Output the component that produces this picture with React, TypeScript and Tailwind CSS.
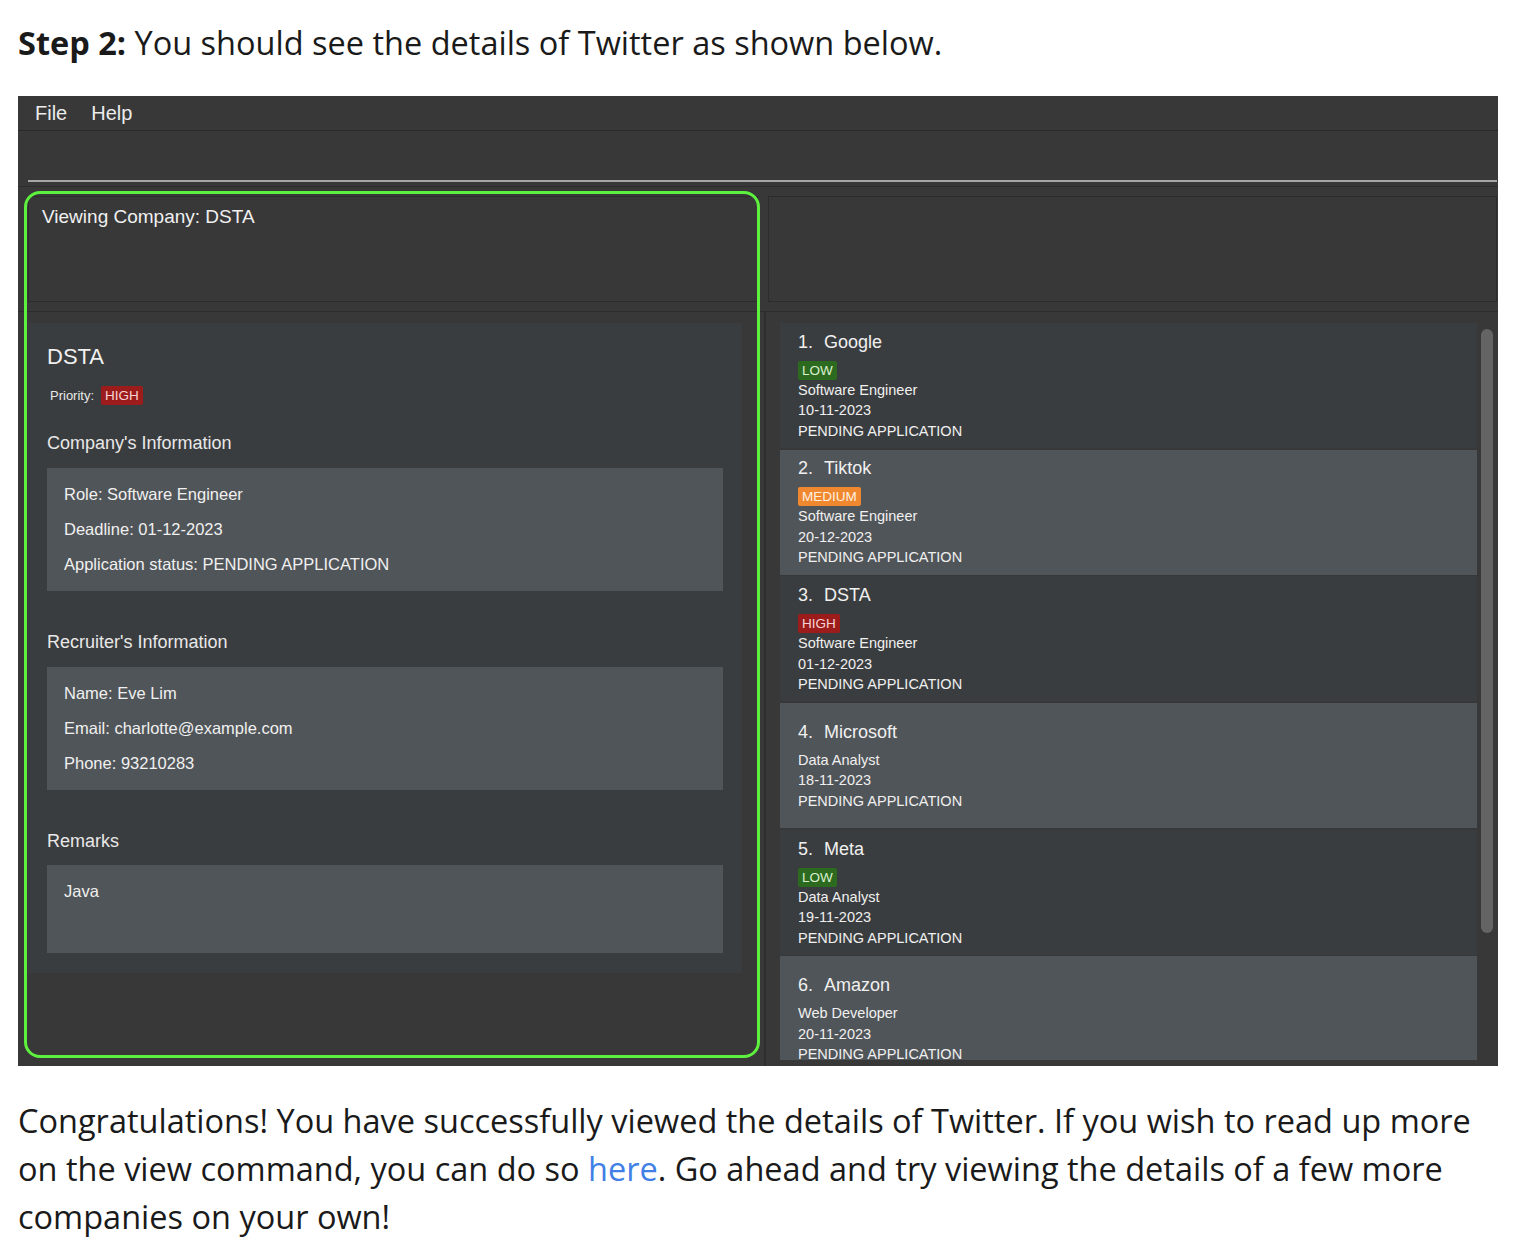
import React from "react";

type Level = "LOW" | "MEDIUM" | "HIGH";

function Badge({ level }: { level: Level }) {
  const cls =
    level === "LOW"
      ? "bg-[#2c6a1f] text-[#dcefcf]"
      : level === "MEDIUM"
      ? "bg-[#f0882f] text-[#fff0e0]"
      : "bg-[#9c1c1c] text-[#f6d3d3]";
  return (
    <span className={`inline-block h-[19px] px-[4px] leading-[19px] text-[13.5px] rounded-[2px] ${cls}`}>
      {level}
    </span>
  );
}

type Item = { n: number; name: string; level?: Level; role: string; date: string };

const items: Item[] = [
  { n: 1, name: "Google", level: "LOW", role: "Software Engineer", date: "10-11-2023" },
  { n: 2, name: "Tiktok", level: "MEDIUM", role: "Software Engineer", date: "20-12-2023" },
  { n: 3, name: "DSTA", level: "HIGH", role: "Software Engineer", date: "01-12-2023" },
  { n: 4, name: "Microsoft", role: "Data Analyst", date: "18-11-2023" },
  { n: 5, name: "Meta", level: "LOW", role: "Data Analyst", date: "19-11-2023" },
  { n: 6, name: "Amazon", role: "Web Developer", date: "20-11-2023" },
];

function ListCard({ item, light }: { item: Item; light: boolean }) {
  return (
    <div
      className={`h-[125px] shrink-0 flex flex-col justify-center px-[18px] text-[#f0f0f0] ${
        light ? "bg-[#505559]" : "bg-[#3a3d3f]"
      } ${item.n === 6 ? "justify-start pt-[17px]" : ""}`}
    >
      <div className="flex text-[18px] leading-[24px]">
        <span>{item.n}.</span>
        <span className="ml-[11px]">{item.name}</span>
      </div>
      {item.level ? (
        <div className="mt-[7px] flex">
          <Badge level={item.level} />
        </div>
      ) : (
        <div className="h-[6px]" />
      )}
      <div className="text-[14.5px] leading-[20.5px]">
        <div>{item.role}</div>
        <div>{item.date}</div>
        <div>PENDING APPLICATION</div>
      </div>
    </div>
  );
}

function InfoBox({ lines, minH }: { lines: string[]; minH?: string }) {
  return (
    <div className={`bg-[#505559] px-[17px] py-[9px] ${minH ?? ""}`}>
      {lines.map((l) => (
        <div key={l} className="text-[16.5px] leading-[35px] text-[#f0f0f0]">
          {l}
        </div>
      ))}
    </div>
  );
}

export default function App() {
  return (
    <div className="min-h-[1256px] bg-white font-['Liberation_Sans',Arial,sans-serif] text-[#111]">
      <div className="px-[18px] pt-[25px]">
        <h1 className="font-['Open_Sans',sans-serif] text-[32.5px] leading-[36px] font-normal whitespace-nowrap text-[#1a1a1a]">
          <b className="font-bold">Step 2:</b> You should see the details of Twitter as shown below.
        </h1>

        <div className="relative mt-[35px] w-[1480px] h-[970px] bg-[#383838] flex flex-col overflow-hidden">
          {/* menu bar */}
          <div className="h-[35px] shrink-0 border-b border-[#2a2a2a] flex items-center px-[17px] gap-[24px] text-[20px] text-[#ececec]">
            <span>File</span>
            <span>Help</span>
          </div>
          {/* command box */}
          <div className="h-[51px] shrink-0 flex flex-col justify-end pl-[10px] pr-[1px]">
            <div className="h-[2px] bg-[#a6a6a6]" />
          </div>
          <div className="h-[4px] shrink-0" />
          <div className="h-[1px] shrink-0 bg-[#2c2c2c]" />
          {/* result display */}
          <div className="h-[124px] shrink-0 flex gap-[10px] pl-[10px] pr-[1px] pt-[9px] pb-[9px]">
            <div className="w-[730px] border border-[#2c2c2c] pl-[13px] pt-[8px] text-[19px] leading-[24px] text-[#f0f0f0]">
              Viewing Company: DSTA
            </div>
            <div className="flex-1 border border-[#2c2c2c]" />
          </div>
          {/* main row */}
          <div className="flex-1 flex min-h-0 border-t border-[#2c2c2c]">
            <div className="w-[747px] shrink-0 pl-[10px] pt-[11px] border-r border-[#2e2e2e]">
              <div className="w-[714px] bg-[#3a3d3f] px-[19px] pt-[20px] pb-[20px] text-[#f0f0f0]">
                <div className="text-[22px] leading-[28px]">DSTA</div>
                <div className="mt-[15px] flex items-center pl-[3px] gap-[7px]">
                  <span className="text-[13px] text-[#e8e8e8]">Priority:</span>
                  <Badge level="HIGH" />
                </div>
                <div className="mt-[25px] text-[18px] leading-[24px] text-[#e8e8e8]">Company's Information</div>
                <div className="mt-[13px]">
                  <InfoBox
                    lines={[
                      "Role: Software Engineer",
                      "Deadline: 01-12-2023",
                      "Application status: PENDING APPLICATION",
                    ]}
                  />
                </div>
                <div className="mt-[39px] text-[18px] leading-[24px] text-[#e8e8e8]">Recruiter's Information</div>
                <div className="mt-[13px]">
                  <InfoBox lines={["Name: Eve Lim", "Email: charlotte@example.com", "Phone: 93210283"]} />
                </div>
                <div className="mt-[39px] text-[18px] leading-[24px] text-[#e8e8e8]">Remarks</div>
                <div className="mt-[12px]">
                  <InfoBox lines={["Java"]} minH="h-[88px]" />
                </div>
              </div>
            </div>
            <div className="flex-1 flex pl-[14px] pt-[11px] pr-[2px] border-l border-[#2e2e2e]">
              <div className="w-[697px] flex flex-col gap-[1.7px] overflow-hidden h-[737px]">
                {items.map((it, i) => (
                  <ListCard key={it.n} item={it} light={i % 2 === 1} />
                ))}
              </div>
              <div className="ml-[4px] w-[12px] pt-[6px]">
                <div className="h-[604px] w-[12px] rounded-full bg-[#646464]" />
              </div>
            </div>
          </div>

          {/* highlight overlay */}
          <div className="pointer-events-none absolute left-[6px] top-[95px] w-[736px] h-[867px] rounded-[16px] border-[3px] border-[#5ef03f]" />
        </div>

        <p className="font-['Open_Sans',sans-serif] mt-[31px] text-[32.5px] leading-[48px] whitespace-nowrap text-[#1a1a1a]">
          Congratulations! You have successfully viewed the details of Twitter. If you wish to read up more
          <br />
          on the view command, you can do so <span className="text-[#3f7fe6]">here</span>. Go ahead and try viewing the details of a few more
          <br />
          companies on your own!
        </p>
      </div>
    </div>
  );
}
